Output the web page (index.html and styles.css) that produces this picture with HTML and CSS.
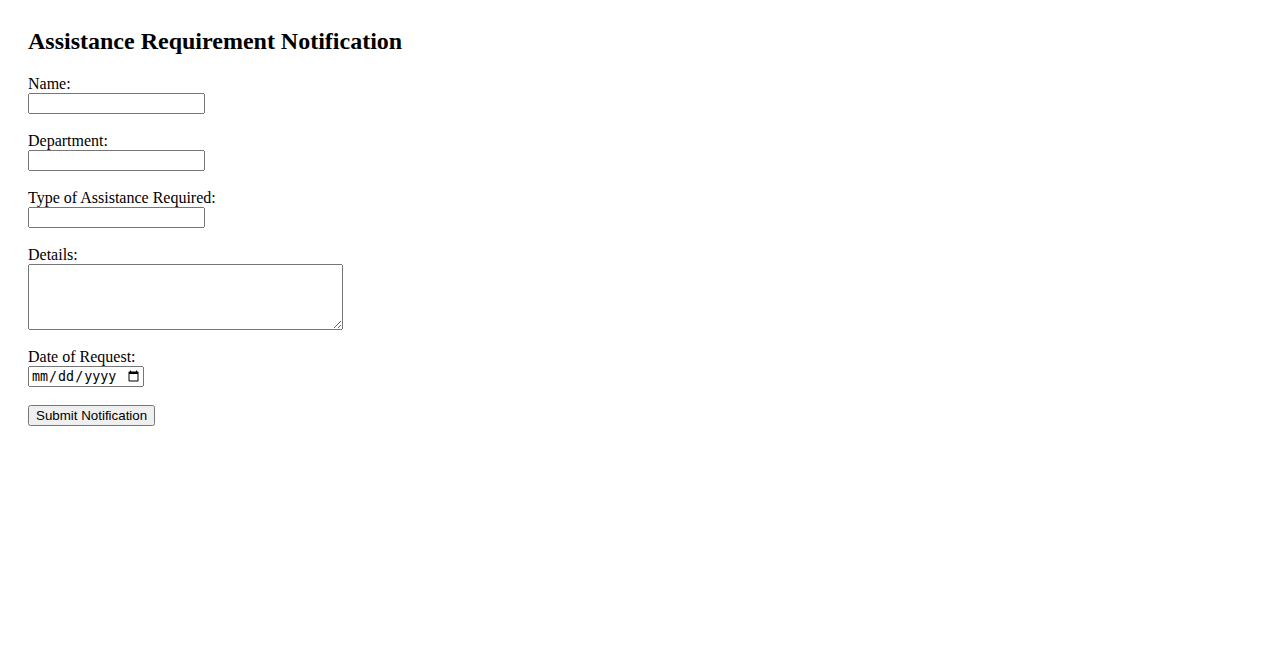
FILE: index.html
```html
<!DOCTYPE html>
<html>
<head>
<meta charset="utf-8">
<title>Assistance Requirement Notification</title>
<link rel="stylesheet" href="styles.css">
</head>
<body>
<div class="page">
  <h2 class="title">Assistance Requirement Notification</h2>
  <form class="form">
    <div class="group">
      <label for="name">Name:</label><br>
      <input class="text-field" type="text" id="name" name="name">
    </div>
    <div class="group">
      <label for="department">Department:</label><br>
      <input class="text-field" type="text" id="department" name="department">
    </div>
    <div class="group">
      <label for="type">Type of Assistance Required:</label><br>
      <input class="text-field" type="text" id="type" name="type">
    </div>
    <div class="group group-area">
      <label for="details">Details:</label><br>
      <textarea class="area-field" id="details" name="details" rows="4" cols="40"></textarea>
    </div>
    <div class="group">
      <label for="date">Date of Request:</label><br>
      <input class="date-field" type="date" id="date" name="date">
    </div>
    <div class="group">
      <button class="submit" type="submit">Submit Notification</button>
    </div>
  </form>
</div>
</body>
</html>
```
FILE: styles.css
```css
body {
  margin: 0;
  font-family: "Liberation Serif", "Times New Roman", serif;
  font-size: 16px;
  color: #000;
  background: #fff;
}
.page {
  padding: 28px;
}
.title {
  font-size: 24px;
  font-weight: bold;
  margin: 0 0 20px;
}
.form {
  margin: 0;
}
.group {
  margin-bottom: 18px;
}
.group-area {
  margin-bottom: 14px;
}
.text-field {
  box-sizing: border-box;
  width: 177px;
  height: 21px;
}
.area-field {
  box-sizing: border-box;
  width: 315px;
  height: 66px;
}
.date-field {
  box-sizing: border-box;
  width: 116px;
  height: 21px;
}
```
